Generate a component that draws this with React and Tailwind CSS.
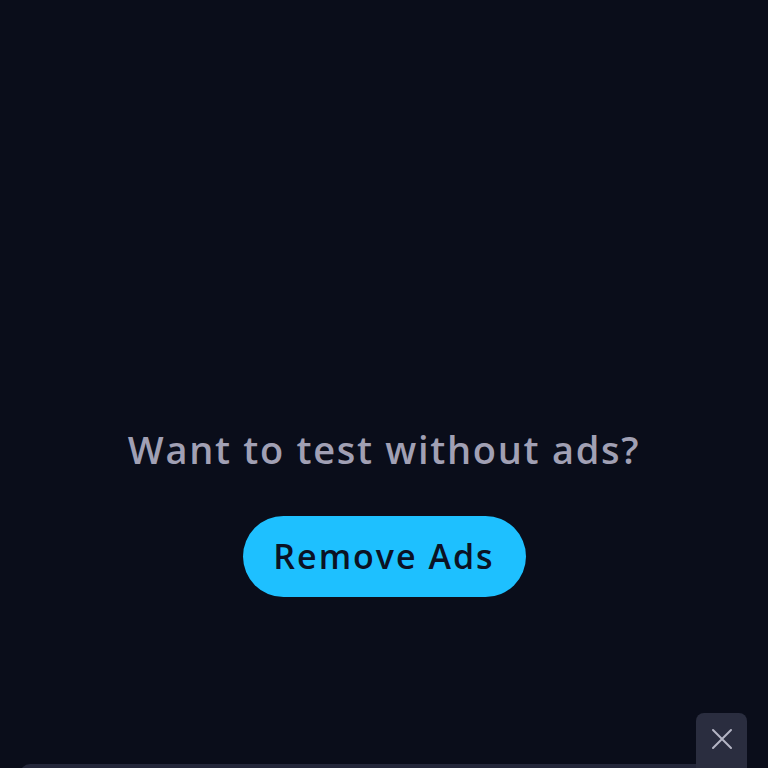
export default function App() {
  return (
    <div className="relative w-[768px] h-[768px] overflow-hidden bg-[#0a0d1a]" style={{ fontFamily: '"Open Sans", "Noto Sans", sans-serif' }}>
      <div className="flex flex-col items-center pt-[423px]">
        <h1 className="text-[38px] leading-[52px] font-semibold text-[#a1a0b4] tracking-[1.7px]">Want to test without ads?</h1>
        <button className="mt-[41px] w-[283px] h-[81px] rounded-full bg-[#1ec0ff] text-[#0b1224] text-[34px] font-semibold tracking-[2px]">Remove Ads</button>
      </div>
      <div className="absolute left-[20px] right-[72px] top-[764px] h-[10px] rounded-tl-[10px] bg-[#24273a]" />
      <button className="absolute left-[696px] top-[713px] w-[51px] h-[60px] rounded-t-[8px] bg-[#2a2d3f] flex items-start justify-center pt-[14px]">
        <svg width="24" height="24" viewBox="0 0 24 24" fill="none" stroke="#b4b5c4" strokeWidth="2" strokeLinecap="round">
          <path d="M3 3L21 21M21 3L3 21" />
        </svg>
      </button>
    </div>
  );
}
